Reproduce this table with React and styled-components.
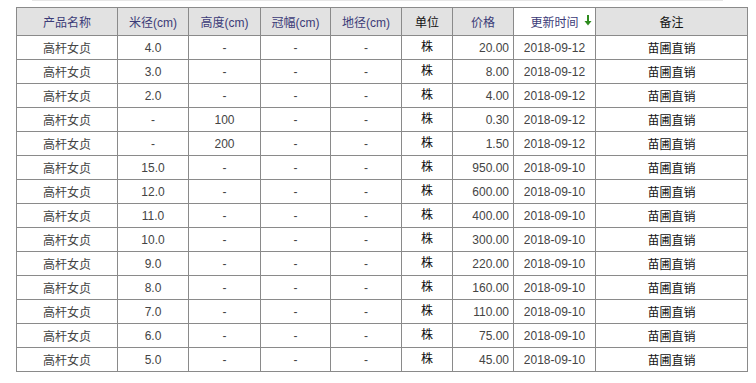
import React from "react";
import styled, { createGlobalStyle } from "styled-components";

const Global = createGlobalStyle`
  html, body { margin: 0; padding: 0; background: #fff; }
  body { font-family: "Liberation Sans", Arial, "Noto Sans CJK SC", sans-serif; font-size: 12px; }
`;

const Page = styled.div`
  padding: 0 0 0 16px;
  width: 756px;
  box-sizing: border-box;
`;

const TopRule = styled.div`
  margin-left: 16px;
  width: 691px;
  height: 1px;
  background: #e6e6e6;
`;

const Table = styled.table`
  margin-top: 6px;
  border-collapse: collapse;
  table-layout: fixed;
  width: 731px;
  border: 1px solid #8a8a8a;
`;

const Th = styled.th`
  height: 27px;
  padding: 0;
  font-weight: normal;
  font-size: 12px;
  text-align: center;
  vertical-align: middle;
  border: 1px solid #8a8a8a;
  background: ${(p) => (p.$active ? "#fff" : "#e2e2e2")};
  color: ${(p) => (p.$plain ? "#111" : "#3b3b78")};
  position: relative;
`;

const Arrow = styled.span`
  position: absolute;
  right: 3px;
  top: 7px;
  width: 8px;
  height: 11px;
`;

const Td = styled.td`
  height: 23px;
  padding: 0 ${(p) => (p.$align === "right" ? "4px" : "0")} 0 0;
  border: 1px solid #8a8a8a;
  font-size: 12px;
  text-align: ${(p) => p.$align || "center"};
  vertical-align: middle;
  color: ${(p) => (p.$dark ? "#111" : "#444")};
  white-space: nowrap;
`;

const Unit = styled.span`
  position: relative;
  top: -2px;
`;

const cols = [101, 71, 72, 70, 71, 51, 61, 82, 152];

const heads = [
  { t: "产品名称" },
  { t: "米径(cm)" },
  { t: "高度(cm)" },
  { t: "冠幅(cm)" },
  { t: "地径(cm)" },
  { t: "单位", plain: true },
  { t: "价格" },
  { t: "更新时间", active: true, plain: false },
  { t: "备注", plain: true },
];

const rows = [
  ["4.0", "-", "20.00", "2018-09-12"],
  ["3.0", "-", "8.00", "2018-09-12"],
  ["2.0", "-", "4.00", "2018-09-12"],
  ["-", "100", "0.30", "2018-09-12"],
  ["-", "200", "1.50", "2018-09-12"],
  ["15.0", "-", "950.00", "2018-09-10"],
  ["12.0", "-", "600.00", "2018-09-10"],
  ["11.0", "-", "400.00", "2018-09-10"],
  ["10.0", "-", "300.00", "2018-09-10"],
  ["9.0", "-", "220.00", "2018-09-10"],
  ["8.0", "-", "160.00", "2018-09-10"],
  ["7.0", "-", "110.00", "2018-09-10"],
  ["6.0", "-", "75.00", "2018-09-10"],
  ["5.0", "-", "45.00", "2018-09-10"],
];

export default function App() {
  return (
    <>
      <Global />
      <Page>
        <TopRule />
        <Table>
          <colgroup>
            {cols.map((w, i) => (
              <col key={i} style={{ width: w }} />
            ))}
          </colgroup>
          <thead>
            <tr>
              {heads.map((h, i) => (
                <Th key={i} $active={h.active} $plain={h.plain}>
                  {h.t}
                  {h.active && (
                    <Arrow>
                      <svg width="8" height="11" viewBox="0 0 8 11">
                        <path d="M4 0 V9" stroke="#2e8b1e" strokeWidth="2" />
                        <path d="M0.5 6 L4 10.5 L7.5 6 Z" fill="#2e8b1e" />
                      </svg>
                    </Arrow>
                  )}
                </Th>
              ))}
            </tr>
          </thead>
          <tbody>
            {rows.map((r, i) => (
              <tr key={i}>
                <Td>高杆女贞</Td>
                <Td>{r[0]}</Td>
                <Td>{r[1]}</Td>
                <Td>-</Td>
                <Td>-</Td>
                <Td $dark>
                  <Unit>株</Unit>
                </Td>
                <Td $align="right">{r[2]}</Td>
                <Td>{r[3]}</Td>
                <Td $dark>苗圃直销</Td>
              </tr>
            ))}
          </tbody>
        </Table>
      </Page>
    </>
  );
}
